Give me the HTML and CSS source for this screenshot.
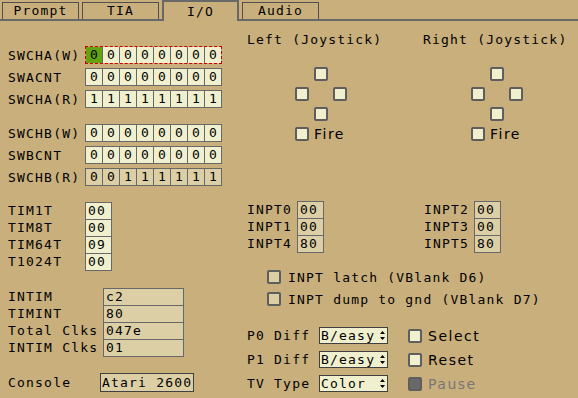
FILE: index.html
```html
<!DOCTYPE html>
<html lang="en">
<head>
    <meta charset="UTF-8">
    <title>I/O</title>
    <link rel="stylesheet" href="styles.css">
</head>
<body>
    <div class="tabs">
        <div class="tab">Prompt</div>
        <div class="tab">TIA</div>
        <div class="tab active">I/O</div>
        <div class="tab">Audio</div>
    </div>
    <div class="panel">
        <div class="left">
            <div class="group">
                <div class="reg"><span class="lbl">SWCHA(W)</span>
                    <div class="bits sel"><span class="bit hi">0</span><span class="bit">0</span><span class="bit">0</span><span class="bit">0</span><span class="bit">0</span><span class="bit">0</span><span class="bit">0</span><span class="bit">0</span></div>
                </div>
                <div class="reg"><span class="lbl">SWACNT</span>
                    <div class="bits"><span class="bit">0</span><span class="bit">0</span><span class="bit">0</span><span class="bit">0</span><span class="bit">0</span><span class="bit">0</span><span class="bit">0</span><span class="bit">0</span></div>
                </div>
                <div class="reg"><span class="lbl">SWCHA(R)</span>
                    <div class="bits"><span class="bit">1</span><span class="bit">1</span><span class="bit">1</span><span class="bit">1</span><span class="bit">1</span><span class="bit">1</span><span class="bit">1</span><span class="bit">1</span></div>
                </div>
            </div>
            <div class="group">
                <div class="reg"><span class="lbl">SWCHB(W)</span>
                    <div class="bits"><span class="bit">0</span><span class="bit">0</span><span class="bit">0</span><span class="bit">0</span><span class="bit">0</span><span class="bit">0</span><span class="bit">0</span><span class="bit">0</span></div>
                </div>
                <div class="reg"><span class="lbl">SWBCNT</span>
                    <div class="bits"><span class="bit">0</span><span class="bit">0</span><span class="bit">0</span><span class="bit">0</span><span class="bit">0</span><span class="bit">0</span><span class="bit">0</span><span class="bit">0</span></div>
                </div>
                <div class="reg"><span class="lbl">SWCHB(R)</span>
                    <div class="bits ro"><span class="bit">0</span><span class="bit">0</span><span class="bit">1</span><span class="bit">1</span><span class="bit">1</span><span class="bit">1</span><span class="bit">1</span><span class="bit">1</span></div>
                </div>
            </div>
            <div class="vals timers">
                <span>TIM1T</span><span class="val">00</span>
                <span>TIM8T</span><span class="val">00</span>
                <span>TIM64T</span><span class="val">09</span>
                <span>T1024T</span><span class="val">00</span>
            </div>
            <div class="vals intim">
                <span>INTIM</span><span class="val ro">c2</span>
                <span>TIMINT</span><span class="val ro">80</span>
                <span>Total Clks</span><span class="val ro">047e</span>
                <span>INTIM Clks</span><span class="val ro">01</span>
            </div>
            <div class="console">
                <span class="lbl">Console</span>
                <span class="console-box">Atari 2600</span>
            </div>
        </div>
        <div class="right">
            <div class="ports">
                <div class="port">
                    <div class="port-title">Left (Joystick)</div>
                    <div class="pad">
                        <span></span><span class="cb"></span><span></span>
                        <span class="cb"></span><span></span><span class="cb"></span>
                        <span></span><span class="cb"></span><span></span>
                    </div>
                    <div class="fire"><span class="cb"></span><span class="sans">Fire</span></div>
                </div>
                <div class="port">
                    <div class="port-title">Right (Joystick)</div>
                    <div class="pad">
                        <span></span><span class="cb"></span><span></span>
                        <span class="cb"></span><span></span><span class="cb"></span>
                        <span></span><span class="cb"></span><span></span>
                    </div>
                    <div class="fire"><span class="cb"></span><span class="sans">Fire</span></div>
                </div>
            </div>
            <div class="inpts">
                <div class="vals inpt">
                    <span>INPT0</span><span class="val ro">00</span>
                    <span>INPT1</span><span class="val ro">00</span>
                    <span>INPT4</span><span class="val ro">80</span>
                </div>
                <div class="vals inpt">
                    <span>INPT2</span><span class="val ro">00</span>
                    <span>INPT3</span><span class="val ro">00</span>
                    <span>INPT5</span><span class="val ro">80</span>
                </div>
            </div>
            <div class="latch">
                <div class="check"><span class="cb tan"></span>INPT latch (VBlank D6)</div>
                <div class="check"><span class="cb tan"></span>INPT dump to gnd (VBlank D7)</div>
            </div>
            <div class="switches">
                <div class="sw">
                    <span class="lbl">P0 Diff</span>
                    <span class="select">B/easy<svg class="arrows" width="5" height="9" viewBox="0 0 5 9"><path d="M2.5 0 L5 3 L0 3 Z M0 6 L5 6 L2.5 9 Z" fill="#000"/></svg></span>
                    <span class="cb"></span><span class="sans">Select</span>
                </div>
                <div class="sw">
                    <span class="lbl">P1 Diff</span>
                    <span class="select">B/easy<svg class="arrows" width="5" height="9" viewBox="0 0 5 9"><path d="M2.5 0 L5 3 L0 3 Z M0 6 L5 6 L2.5 9 Z" fill="#000"/></svg></span>
                    <span class="cb"></span><span class="sans">Reset</span>
                </div>
                <div class="sw">
                    <span class="lbl">TV Type</span>
                    <span class="select">Color<svg class="arrows" width="5" height="9" viewBox="0 0 5 9"><path d="M2.5 0 L5 3 L0 3 Z M0 6 L5 6 L2.5 9 Z" fill="#000"/></svg></span>
                    <span class="cb off"></span><span class="sans off-text">Pause</span>
                </div>
            </div>
        </div>
    </div>
</body>
</html>
```
FILE: styles.css
```css
body{
    margin: 0;
    width: 578px;
    height: 398px;
    overflow: hidden;
    background-color: #c9af7c;	/* ダイアログの地色 */
    color: #000000;
    font: 13px/1 "DejaVu Sans Mono", monospace;
    letter-spacing: 1.2px;
}
/* タブ */
.tabs{
    display: flex;
    align-items: flex-end;
    gap: 3px;
    height: 19px;
    padding-left: 2px;
    border-bottom: 2px solid #686868;
}
.tab{
    box-sizing: border-box;
    width: 77px;
    height: 17px;
    border: 1px solid #505050;
    border-bottom: none;
    text-align: center;
    line-height: 16px;
    font-size: 13px;
    background-color: #c9af7c;
}
.tab.active{
    height: 21px;
    margin-bottom: -2px;
    line-height: 19px;
    border: 2px solid #686868;
    border-bottom: none;
}
.panel{
    display: grid;
    grid-template-columns: 239px 1fr;
    padding-left: 8px;
}
/* 左側 */
.left{
    padding-top: 25px;
}
.group + .group{
    margin-top: 16px;
}
.reg{
    display: flex;
    align-items: center;
    height: 18px;
    margin-bottom: 4px;
}
.lbl{
    width: 77px;
    flex: none;
}
.bits{
    display: flex;
    gap: 1px;
    background: #686868;
    border: 1px solid #686868;
}
.bits.sel{
    border: 1px dashed #c80000;
    background-clip: padding-box;
}
.bit{
    width: 16px;
    height: 16px;
    line-height: 16px;
    text-align: center;
    letter-spacing: 0;
    background-color: #f0f0cf;
}
.bit.hi{
    background-color: #63a30f;
}
.bits.ro .bit{
    background-color: #dccfa5;
}
.vals{
    display: grid;
    grid-auto-rows: 17px;
    align-items: start;
}
.vals > span{
    line-height: 18px;
}
.vals .val{
    box-sizing: border-box;
    height: 18px;
    border: 1px solid #686868;
    padding-left: 2px;
    line-height: 16px;
    background-color: #f0f0cf;
}
.vals .val.ro{
    background-color: #dccfa5;
}
.timers{
    margin-top: 16px;
    grid-template-columns: 77px 27px;
}
.intim{
    margin-top: 18px;
    grid-template-columns: 95px 81px;
}
.console{
    display: flex;
    align-items: center;
    margin-top: 17px;
}
.console .lbl{
    width: 92px;
}
.console-box{
    box-sizing: border-box;
    width: 94px;
    height: 19px;
    line-height: 17px;
    padding-left: 1px;
    border: 1px solid #404040;
    background-color: #dccfa5;
}
/* 右側 */
.right{
    padding-top: 12px;
}
.ports{
    display: grid;
    grid-template-columns: 176px 176px;
}
.port-title{
    height: 14px;
    line-height: 14px;
}
.pad{
    display: grid;
    grid-template-columns: 14px 14px 14px;
    grid-auto-rows: 14px;
    gap: 6px 5px;
    margin: 20px 0 0 48px;
}
.cb{
    box-sizing: border-box;
    display: inline-block;
    width: 14px;
    height: 14px;
    border: 2px solid #5e5e5e;
    border-radius: 2px;
    background-color: #f0f0cf;
    flex: none;
}
.cb.tan{
    background-color: #dccfa5;
}
.cb.off{
    background-color: #686868;
}
.fire{
    display: flex;
    align-items: center;
    gap: 5px;
    margin: 6px 0 0 48px;
}
.sans{
    font-family: "DejaVu Sans", sans-serif;
    font-size: 14px;
    letter-spacing: 1.5px;
}
.off-text{
    color: #777777;
}
.inpts{
    display: grid;
    grid-template-columns: 177px 176px;
    margin-top: 60px;
}
.inpt{
    grid-template-columns: 50px 27px;
}
.latch{
    margin: 18px 0 0 20px;
}
.check{
    display: flex;
    align-items: center;
    gap: 7px;
    height: 14px;
    margin-bottom: 8px;
}
.switches{
    margin-top: 21px;
}
.sw{
    display: flex;
    align-items: center;
    height: 17px;
    margin-bottom: 7px;
}
.sw .lbl{
    width: 72px;
}
.select{
    box-sizing: border-box;
    display: flex;
    align-items: center;
    justify-content: space-between;
    width: 69px;
    height: 17px;
    padding: 0 2px 0 1px;
    border: 1px solid #404040;
    background-color: #f0f0cf;
    margin-right: 20px;
}
.sw .cb{
    margin-right: 6px;
}
```
